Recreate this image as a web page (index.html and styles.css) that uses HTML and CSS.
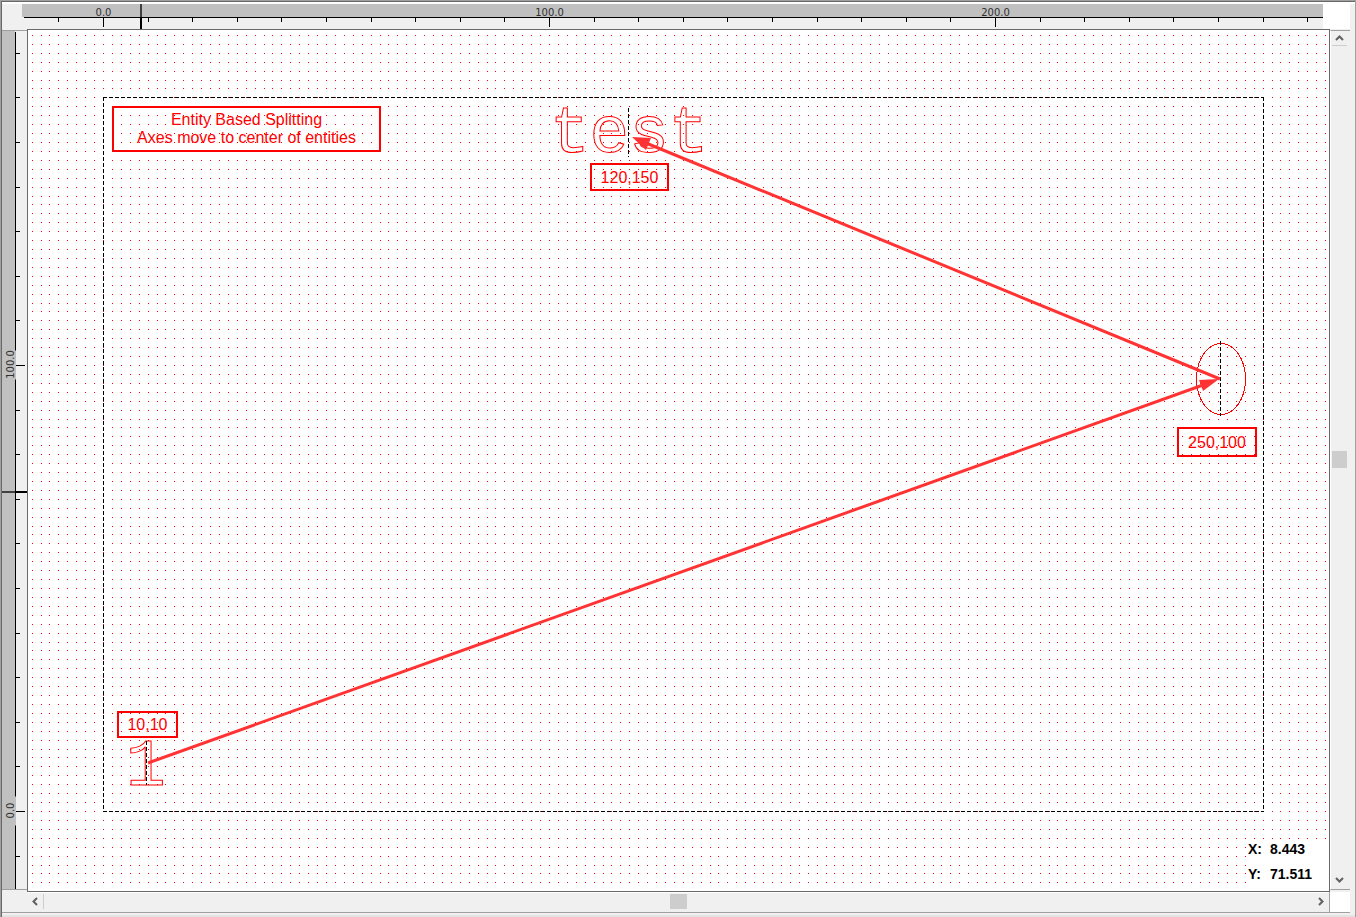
FILE: index.html
```html
<!DOCTYPE html>
<html lang="en">
<head>
<meta charset="utf-8">
<title>Entity Based Splitting</title>
<link rel="stylesheet" href="styles.css">
</head>
<body>
<main class="window">
  <div class="top-row">
    <div class="corner"></div>
    <svg class="ruler-top" id="ruler-top" aria-label="Horizontal ruler"></svg>
    <div class="top-end"></div>
  </div>
  <div class="left-col">
    <svg class="ruler-left" id="ruler-left" aria-label="Vertical ruler"></svg>
  </div>
  <section class="canvas" aria-label="Drawing canvas">
    <svg class="drawing">
      <path id="grid" class="grid-dots"/>
      <path class="field-x" d="M75 67.5H1235M75 781.5H1235"/>
      <path class="field-y" d="M75.5 67V782M1235.5 67V782"/>
      <text class="outline-text" x="522" y="122">test</text>
      <text class="outline-text" x="98" y="755">1</text>
      <ellipse class="entity" cx="1193" cy="349" rx="24.5" ry="35.5"/>
      <path class="axis" d="M600.5 78V127M1192.5 311V386M118.5 711V755"/>
      <path class="arrow-line" d="M120 733L1175 355M1192 349L618 113"/>
      <path class="arrow-head" d="M1191 349L1175 361L1171 350ZM604 107L623 108L618 120Z"/>
    </svg>
    <p class="label label-title">Entity Based Splitting<br>Axes move to center of entities</p>
    <p class="label label-test">120,150</p>
    <p class="label label-circle">250,100</p>
    <p class="label label-one">10,10</p>
    <div class="readout">
      <span>X:</span><span>8.443</span>
      <span>Y:</span><span>71.511</span>
    </div>
  </section>
  <div class="scroll-y">
    <button class="step" aria-label="Scroll up"><svg width="9" height="6" viewBox="0 0 9 6"><path d="M1 5L4.5 1.5L8 5"/></svg></button>
    <div class="track"><div class="thumb"></div></div>
    <button class="step" aria-label="Scroll down"><svg width="9" height="6" viewBox="0 0 9 6"><path d="M1 1L4.5 4.5L8 1"/></svg></button>
  </div>
  <div class="bottom-row">
    <div class="bottom-start"></div>
    <div class="scroll-x">
      <button class="step" aria-label="Scroll left"><svg width="6" height="9" viewBox="0 0 6 9"><path d="M5 1L1.5 4.5L5 8"/></svg></button>
      <div class="track"><div class="thumb"></div></div>
      <button class="step" aria-label="Scroll right"><svg width="6" height="9" viewBox="0 0 6 9"><path d="M1 1L4.5 4.5L1 8"/></svg></button>
    </div>
    <div class="bottom-end"></div>
  </div>
</main>
<script src="script.js"></script>
</body>
</html>
```

FILE: styles.css
```css
* { box-sizing: border-box; }
body { margin: 0; background: #f0f0f0; font-family: "Liberation Sans", Arial, sans-serif; }
.window {
  display: grid;
  grid-template-columns: 25px 1fr 20px;
  grid-template-rows: 25px 1fr 21px;
  height: 100vh;
  padding: 4px 6px 4px 2px;
  background: #f0f0f0;
  box-shadow: inset 0 1px #a0a0a0, inset 1px 0 #a0a0a0, inset -1px 0 #a0a0a0,
    inset 0 2px #696969, inset 2px 0 #696969, inset 0 -2px #e3e3e3, inset 0 4px #fff;
}
.top-row { grid-column: 1 / -1; display: flex; }
.corner { width: 20px; }
.ruler-top { flex: 1; min-width: 0; height: 25px; background: linear-gradient(#c0c0c0 13px, #f0f0f0 13px); }
.top-end { width: 27px; background: #fff; }
.left-col { border-top: 1px solid #f0f0f0; display: flex; overflow: hidden; padding-bottom: 2px; }
.ruler-left {
  width: 25px; height: 100%;
  border-top: 1px solid #a0a0a0; border-bottom: 1px solid #a0a0a0;
  background: linear-gradient(90deg, #c0c0c0 13px, #f0f0f0 13px);
}
.tick { stroke: #000; stroke-width: 1; shape-rendering: crispEdges; fill: none; }
.cursor-dark { fill: #404040; }
.cursor-black { fill: #000; }
.ruler-text { font: 10px "DejaVu Sans", sans-serif; fill: #303030; text-anchor: middle; }
.ruler-gap { fill: #c0c0c0; }
.canvas { position: relative; overflow: hidden; background: #fff; border: 1px solid #696969; }
.drawing { display: block; width: 100%; height: 100%; }
.grid-dots { fill: #f00; shape-rendering: crispEdges; }
.field-x, .field-y, .axis { fill: none; stroke: #000; shape-rendering: crispEdges; }
.field-x, .field-y, .axis { stroke-dasharray: 4 2; }
.outline-text { font: 66px "Liberation Mono", monospace; fill: none; stroke: #f00; stroke-width: 1; }
.entity { fill: none; stroke: #f00; shape-rendering: crispEdges; }
.arrow-line { fill: none; stroke: #f33; stroke-width: 3; }
.arrow-head { fill: #f33; }
.label {
  position: absolute; margin: 0; border: 2px solid #f00; color: #f00;
  font-size: 16px; line-height: 18px; text-align: center; white-space: nowrap;
}
.label-title { left: 84px; top: 76px; width: 269px; padding: 3px 0; }
.label-test { left: 562px; top: 133px; width: 79px; padding: 4px 0 2px; }
.label-circle { left: 1149px; top: 397px; width: 80px; padding: 5px 0 3px; }
.label-one { left: 89px; top: 681px; width: 61px; padding: 3px 0 2px; }
.readout {
  position: absolute; right: 0; bottom: 3px; width: 81px; height: 47px;
  display: grid; grid-template-columns: 22px 1fr; grid-template-rows: 25px 25px;
  background: #fff; font-size: 14px; font-weight: bold; line-height: 16px; color: #000;
}
.step { display: flex; align-items: center; justify-content: center; padding: 0; border: 0; background: transparent; }
.step path { fill: none; stroke: #606060; stroke-width: 2; }
.scroll-y {
  display: flex; flex-direction: column; margin: 1px 0 2px; padding: 0 3px 2px 1px;
  border-top: 1px solid #a0a0a0; border-bottom: 1px solid #a0a0a0; border-left: 1px solid #fff;
}
.scroll-y .step { height: 15px; flex: none; }
.scroll-y .step:first-child { border-bottom: 1px solid #cdcdcd; }
.track { flex: 1; display: flex; }
.scroll-y .track { flex-direction: column; justify-content: center; }
.thumb { background: #cdcdcd; }
.scroll-y .thumb { height: 17px; }
.bottom-row { grid-column: 1 / -1; display: flex; border-bottom: 1px solid #a0a0a0; }
.bottom-start { width: 25px; }
.scroll-x { flex: 1; display: flex; border-top: 1px solid #fff; padding: 1px 0 3px; }
.scroll-x .step { width: 17px; flex: none; }
.scroll-x .step:first-child { border-right: 1px solid #cdcdcd; }
.scroll-x .track { justify-content: center; }
.scroll-x .thumb { width: 17px; }
.bottom-end { width: 21px; background: #fff; border-left: 1px solid #a0a0a0; }
```

FILE: script.js
```js
const STEP = 8.92;
const ORIGIN_X = 75;
const ORIGIN_Y = 781;
const canvas = document.querySelector(".canvas");

function range(from, to) {
  const list = [];
  for (let i = from; i <= to; i++) list.push(i);
  return list;
}

function draw() {
  const w = canvas.clientWidth, h = canvas.clientHeight;

  const xs = range(-8, Math.floor((w - 3 - ORIGIN_X) / STEP)).map(i => Math.round(ORIGIN_X + i * STEP));
  const ys = range(-87, Math.floor((h - 8 - ORIGIN_Y) / STEP)).map(i => Math.round(ORIGIN_Y + i * STEP));
  document.getElementById("grid").setAttribute("d",
    ys.map(y => xs.map(x => `M${x} ${y}h1v1h-1z`).join("")).join(""));

  const top = document.getElementById("ruler-top");
  const topW = top.clientWidth;
  let ticks = `M2 13.5H${topW}`, labels = "";
  range(-1, Math.floor((topW - 81) / (STEP * 5))).forEach(i => {
    const x = Math.round(81 + i * STEP * 5) + 0.5;
    ticks += `M${x} 14V${i % 10 ? 18 : 23}`;
    if (i % 10 === 0) labels += `<text class="ruler-text" x="${x}" y="12">${(i * 10).toFixed(1)}</text>`;
  });
  top.innerHTML = `<path class="tick" d="${ticks}"/>${labels}
    <rect class="cursor-dark" x="118" y="0" width="2" height="13"/>
    <rect class="cursor-black" x="118" y="14" width="2" height="11"/>`;

  const left = document.getElementById("ruler-left");
  const leftH = left.clientHeight;
  let marks = `M13.5 1V${leftH}`, names = "";
  range(-17, Math.floor((leftH - 780) / (STEP * 5))).forEach(i => {
    const y = Math.round(780 + i * STEP * 5) + 0.5;
    marks += `M14 ${y}H${i % 10 ? 18 : 23}`;
    if (i % 10 === 0) names += `<rect class="ruler-gap" x="13" y="${y - 15}" width="1" height="29"/>
      <text class="ruler-text" transform="translate(12 ${y - 1}) rotate(-90)">${Math.abs(i * 10).toFixed(1)}</text>`;
  });
  left.innerHTML = `<path class="tick" d="${marks}"/>${names}
    <rect class="cursor-dark" x="0" y="460" width="13" height="2"/>
    <rect class="cursor-black" x="14" y="460" width="11" height="2"/>`;
}

draw();
window.addEventListener("resize", draw);
```
